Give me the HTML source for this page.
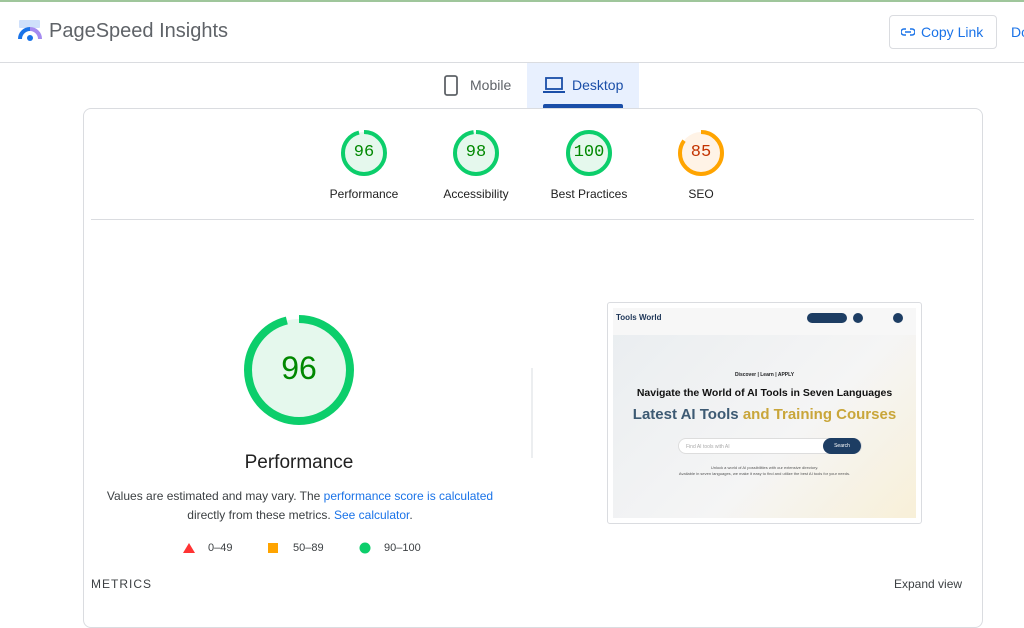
<!DOCTYPE html>
<html><head><meta charset="utf-8"><style>
*{margin:0;padding:0;box-sizing:border-box}
body{width:1024px;height:597px;overflow:hidden;background:#fff;font-family:"Liberation Sans",Arial,sans-serif;position:relative;color:#202124}
.a{position:absolute}
.lbl{font-size:12px;color:#212121;text-align:center;width:120px}
.mono{font-family:"Liberation Mono",monospace}
</style></head><body>
<div class="a" style="left:0;top:0;width:1024px;height:2px;background:#9fc69b"></div>
<svg class="a" style="left:17px;top:19px" width="26" height="24" viewBox="0 0 26 24">
<rect x="2" y="1" width="21" height="8" rx="1" fill="#cfe0fb"/>
<path d="M3 20 A10 10 0 0 1 13 10" stroke="#1a73e8" stroke-width="4" fill="none"/>
<path d="M13 10 A10 10 0 0 1 23 20" stroke="#a58bf0" stroke-width="4" fill="none"/>
<circle cx="13" cy="19" r="3" fill="#1a73e8"/>
</svg>
<div class="a" style="left:49px;top:20px;font-size:20px;color:#5f6368">PageSpeed Insights</div>
<div class="a" style="left:889px;top:15px;width:108px;height:34px;border:1px solid #dadce0;border-radius:4px;color:#1a73e8;font-size:14px;line-height:32px;padding-left:31px">Copy Link</div>
<svg class="a" style="left:901px;top:26px" width="14" height="12" viewBox="0 0 14 12"><path d="M5 3H3a3 3 0 0 0 0 6h2M9 3h2a3 3 0 0 1 0 6H9M4 6h6" stroke="#1a73e8" stroke-width="1.5" fill="none"/></svg>
<div class="a" style="left:1011px;top:24px;color:#1a73e8;font-size:14px">Do</div>
<div class="a" style="left:0;top:62px;width:1024px;height:1px;background:#dadce0"></div>
<div class="a" style="left:527px;top:63px;width:112px;height:45px;background:#e8f0fe"></div>
<div class="a" style="left:543px;top:104px;width:80px;height:4px;background:#1a4ea8;border-radius:2px 2px 0 0"></div>
<svg class="a" style="left:444px;top:75px" width="14" height="21"><rect x="1" y="1" width="12" height="19" rx="2" stroke="#5f6368" stroke-width="1.8" fill="none"/></svg>
<div class="a" style="left:470px;top:77px;font-size:14px;color:#5f6368">Mobile</div>
<svg class="a" style="left:543px;top:77px" width="22" height="17"><rect x="3" y="1" width="16" height="11" stroke="#1a4ea8" stroke-width="1.8" fill="none"/><rect x="0" y="14" width="22" height="2" fill="#1a4ea8"/></svg>
<div class="a" style="left:572px;top:77px;font-size:14px;color:#1a4ea8">Desktop</div>
<div class="a" style="left:83px;top:108px;width:900px;height:520px;border:1px solid #dadce0;border-radius:8px"></div>
<div class="a" style="left:91px;top:219px;width:883px;height:1px;background:#dadce0"></div>

<svg class="a" style="left:0;top:0" width="1024" height="597">
<g stroke-width="4">
<circle cx="364" cy="153" r="21" fill="#e5f8ed"/><circle cx="364" cy="153" r="21" fill="none" stroke="#0cce6b" stroke-dasharray="126.7 132" transform="rotate(-90 364 153)"/>
<circle cx="476" cy="153" r="21" fill="#e5f8ed"/><circle cx="476" cy="153" r="21" fill="none" stroke="#0cce6b" stroke-dasharray="129.3 132" transform="rotate(-90 476 153)"/>
<circle cx="589" cy="153" r="21" fill="#e5f8ed" stroke="#0cce6b"/>
<circle cx="701" cy="153" r="21" fill="#fff3e6"/><circle cx="701" cy="153" r="21" fill="none" stroke="#ffa400" stroke-dasharray="112 132" transform="rotate(-90 701 153)"/>
</g>
<circle cx="299" cy="370" r="51" fill="#e5f8ed"/>
<circle cx="299" cy="370" r="51" fill="none" stroke="#0cce6b" stroke-width="8" stroke-dasharray="307.6 321" transform="rotate(-90 299 370)"/>
<path d="M189 543 l6 10 l-12 0z" fill="#ff3333"/>
<rect x="268" y="543" width="10" height="10" fill="#ffa400"/>
<circle cx="365" cy="548" r="5.5" fill="#0cce6b"/>
<line x1="532" y1="368" x2="532" y2="458" stroke="#dadce0"/>
</svg>
<div class="a mono" style="left:334px;top:143px;width:60px;text-align:center;font-size:17px;color:#008800">96</div>
<div class="a mono" style="left:446px;top:143px;width:60px;text-align:center;font-size:17px;color:#008800">98</div>
<div class="a mono" style="left:559px;top:143px;width:60px;text-align:center;font-size:17px;color:#008800">100</div>
<div class="a mono" style="left:671px;top:143px;width:60px;text-align:center;font-size:17px;color:#c33300">85</div>
<div class="a lbl" style="left:304px;top:187px">Performance</div>
<div class="a lbl" style="left:416px;top:187px">Accessibility</div>
<div class="a lbl" style="left:529px;top:187px">Best Practices</div>
<div class="a lbl" style="left:641px;top:187px">SEO</div>
<div class="a" style="left:239px;top:350px;width:120px;text-align:center;font-size:32px;color:#008800">96</div>
<div class="a" style="left:199px;top:452px;width:200px;text-align:center;font-size:19px;color:#212121">Performance</div>
<div class="a" style="left:100px;top:487px;width:400px;text-align:center;font-size:12px;line-height:19px;color:#3c4043">Values are estimated and may vary. The <span style="color:#1a73e8">performance score is calculated</span><br>directly from these metrics. <span style="color:#1a73e8">See calculator</span>.</div>
<div class="a" style="left:208px;top:542px;font-size:11px;color:#3c4043">0–49</div>
<div class="a" style="left:293px;top:542px;font-size:11px;color:#3c4043">50–89</div>
<div class="a" style="left:384px;top:542px;font-size:11px;color:#3c4043">90–100</div>
<div class="a" style="left:91px;top:577px;font-size:12px;letter-spacing:1px;color:#3c4043">METRICS</div>
<div class="a" style="left:894px;top:577px;font-size:12px;color:#3c4043">Expand view</div>

<div class="a" style="left:607px;top:302px;width:315px;height:222px;border:1px solid #dadce0;border-radius:3px;padding:5px;background:#fff">
<div style="position:relative;width:303px;height:210px;background:linear-gradient(135deg,#e9edf0,#f5f5f5 60%,#f8f0d8);overflow:hidden">
<div class="a" style="left:0;top:0;width:303px;height:27px;background:#f7f7f7"></div>
<div class="a" style="left:3px;top:5px;font-size:8px;font-weight:bold;color:#1d3557">Tools World</div>
<div class="a" style="left:194px;top:5px;width:40px;height:10px;background:#1d3d63;border-radius:5px"></div>
<div class="a" style="left:240px;top:5px;width:10px;height:10px;background:#1d3d63;border-radius:5px"></div>
<div class="a" style="left:280px;top:5px;width:10px;height:10px;background:#1d3d63;border-radius:5px"></div>
<div class="a" style="left:0;top:64px;width:303px;text-align:center;font-size:5px;font-weight:bold">Discover | Learn | APPLY</div>
<div class="a" style="left:0;top:79px;width:303px;text-align:center;font-size:10.5px;font-weight:bold;color:#111">Navigate the World of AI Tools in Seven Languages</div>
<div class="a" style="left:0;top:98px;width:303px;text-align:center;font-size:15px;font-weight:bold;color:#3d5a73">Latest AI Tools <span style="color:#c9a63a">and Training Courses</span></div>
<div class="a" style="left:65px;top:130px;width:184px;height:16px;background:#fff;border:1px solid #ddd;border-radius:8px;font-size:5px;color:#aaa;padding:5px 7px">Find AI tools with AI</div>
<div class="a" style="left:210px;top:130px;width:38px;height:16px;background:#1d3d63;border-radius:8px;font-size:5px;color:#fff;text-align:center;line-height:16px">Search</div>
<div class="a" style="left:40px;top:157px;width:223px;text-align:center;font-size:4px;line-height:6px;color:#555">Unlock a world of AI possibilities with our extensive directory.<br>Available in seven languages, we make it easy to find and utilize the best AI tools for your needs.</div>
</div></div>
</body></html>
